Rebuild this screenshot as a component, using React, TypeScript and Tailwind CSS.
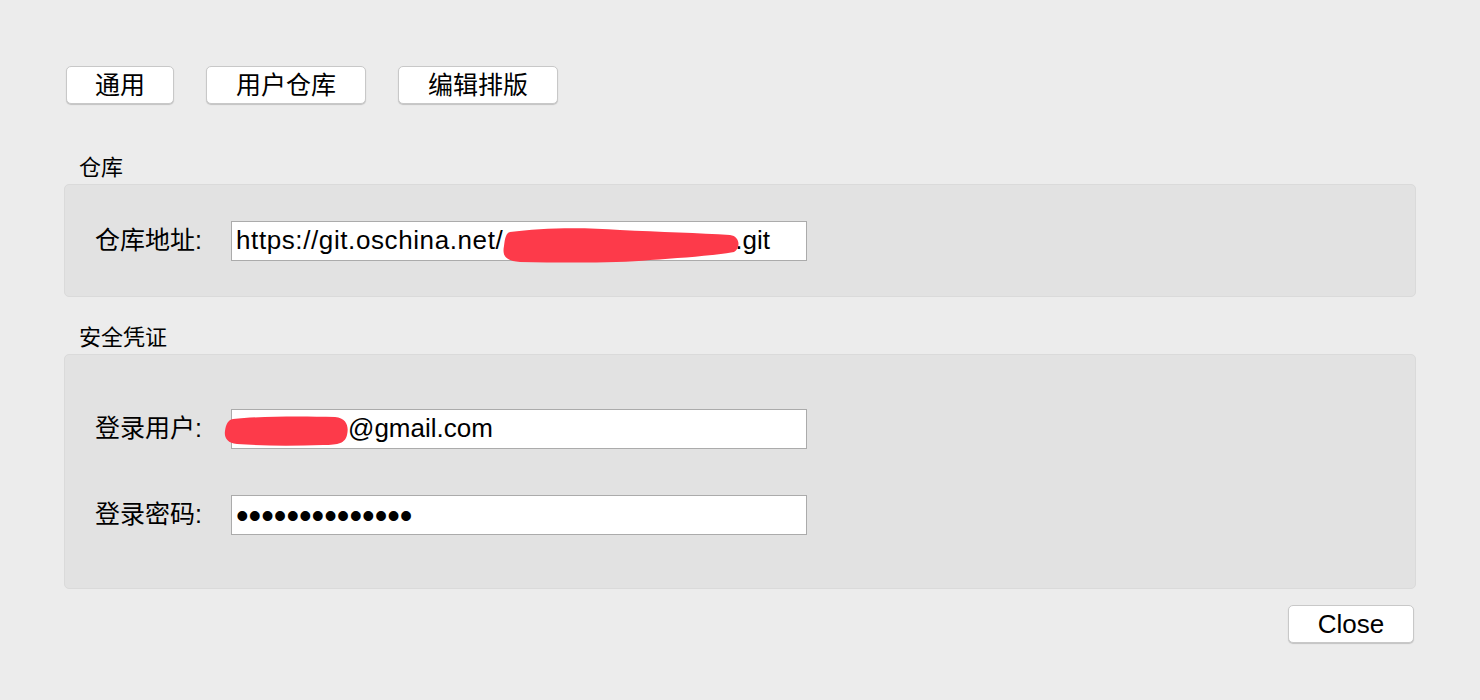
import React from "react";

const font = { fontFamily: '"Liberation Sans", "Noto Sans CJK SC", sans-serif' };

const tabs: { label: string; width: string }[] = [
  { label: "通用", width: "w-[108px]" },
  { label: "用户仓库", width: "w-[160px]" },
  { label: "编辑排版", width: "w-[160px]" },
];

const MacButton: React.FC<{ label: string; className?: string }> = ({ label, className = "" }) => (
  <button
    className={`h-[38px] rounded-[5px] bg-white border border-[#c8c8c8] shadow-[0_1px_1px_rgba(0,0,0,0.18)] text-black leading-none ${className}`}
  >
    {label}
  </button>
);

const Field: React.FC<{ label: string; children: React.ReactNode }> = ({ label, children }) => (
  <div className="flex items-center">
    <div className="w-[136px] text-[25px] text-black leading-none">{label}</div>
    <div className="relative w-[576px] h-[40px] bg-white border border-[#ababab] flex items-center pl-[4px] text-[26px] text-black">
      {children}
    </div>
  </div>
);

const App: React.FC = () => {
  return (
    <div className="w-[1480px] h-[700px] bg-[#ececec] px-[64px] pt-[66px]" style={font}>
      {/* Tabs */}
      <div className="flex gap-[32px] pl-[2px]">
        {tabs.map((t) => (
          <MacButton key={t.label} label={t.label} className={`${t.width} text-[25px]`} />
        ))}
      </div>

      {/* 仓库 */}
      <div className="mt-[52px] pl-[15px] text-[22px] leading-[24px] text-black">仓库</div>
      <div className="mt-[4px] h-[113px] rounded-[5px] bg-[#e2e2e2] border border-[#dadada] flex items-center pl-[30px]">
        <Field label="仓库地址:">
          <span className="tracking-[0.6px]">https://git.oschina.net/</span>
          <span className="inline-block w-[232px]" />
          <span>.git</span>
          <svg className="absolute left-[268px] top-[4px]" width="246" height="38" viewBox="0 0 246 38">
            <path
              d="M10 6 C40 2 80 1 120 4 C160 6 200 7 230 9 C240 10 241 22 234 26 C210 30 180 32 150 34 C120 37 70 37 20 36 C6 35 2 30 4 20 C5 12 6 7 10 6 Z"
              fill="#fd3a4a"
            />
          </svg>
        </Field>
      </div>

      {/* 安全凭证 */}
      <div className="mt-[29px] pl-[15px] text-[22px] leading-[24px] text-black">安全凭证</div>
      <div className="mt-[4px] h-[235px] rounded-[5px] bg-[#e2e2e2] border border-[#dadada] flex flex-col justify-center gap-[46px] pl-[30px]">
        <Field label="登录用户:">
          <span className="inline-block w-[112px]" />
          <span>@gmail.com</span>
          <svg className="absolute left-[-9px] top-[5px]" width="128" height="32" viewBox="0 0 128 32">
            <path
              d="M10 4 C40 1 80 1 112 2 C124 3 126 12 124 20 C122 28 116 30 100 30 C70 31 40 31 14 29 C4 28 1 22 2 16 C3 9 5 5 10 4 Z"
              fill="#fd3a4a"
            />
          </svg>
        </Field>
        <Field label="登录密码:">
          <span className="text-[36px] leading-none relative top-[1px]">••••••••••••••</span>
        </Field>
      </div>

      {/* Footer */}
      <div className="mt-[16px] flex justify-end pr-[2px]">
        <MacButton label="Close" className="w-[126px] text-[26px]" />
      </div>
    </div>
  );
};

export default App;
